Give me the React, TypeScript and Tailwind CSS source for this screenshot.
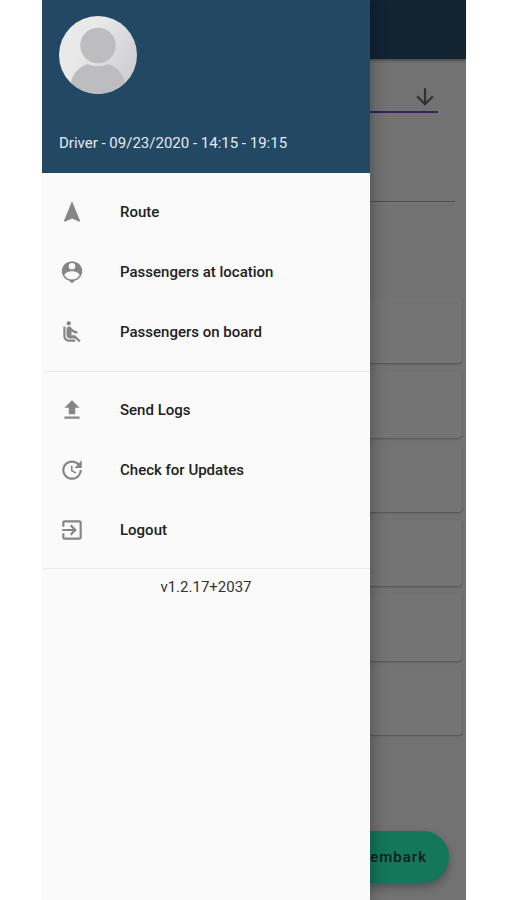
import type { ReactNode } from "react";
import {
  MdAirlineSeatReclineNormal,
  MdArrowDownward,
  MdExitToApp,
  MdFileUpload,
  MdNavigation,
  MdUpdate,
} from "react-icons/md";

function PersonPin() {
  return (
    <svg viewBox="0 0 24 24" fill="currentColor" aria-hidden="true">
      <path
        fillRule="evenodd"
        d="M12 2a9.600 9.200 0 0 1 3 17.900L12 22.300l-3-2.400A9.600 9.200 0 0 1 12 2zm0 1.700a3 3 0 1 0 0 6 3 3 0 0 0 0-6zm0 7.500c-3 0-7 1.500-7 3.700 1.500 2.500 4 4 7 4s5.500-1.500 7-4c0-2.200-4-3.700-7-3.700z"
      />
    </svg>
  );
}

function Avatar() {
  return (
    <svg viewBox="0 0 78 78" className="size-[78px]" role="img" aria-label="Driver photo">
      <defs>
        <linearGradient id="disc" x1="0" y1="0" x2="1" y2="0.6">
          <stop offset="0.4" stopColor="#e9e9ea" />
          <stop offset="1" stopColor="#cfcfd1" />
        </linearGradient>
        <clipPath id="round">
          <circle cx="39" cy="39" r="39" />
        </clipPath>
      </defs>
      <g clipPath="url(#round)">
        <rect width="78" height="78" fill="url(#disc)" />
        <circle cx="39" cy="29.500" r="17.800" fill="#bdbdc0" />
        <path d="M29 48c6 3 14 3 20 0 8 2 15 9 17 18v12H12V66c2-9 9-16 17-18z" fill="#bdbdc0" />
      </g>
    </svg>
  );
}

function Item({ icon, children }: { icon: ReactNode; children: ReactNode }) {
  return (
    <li>
      <button
        type="button"
        className="flex h-[60px] w-full items-center gap-[35px] px-[17px] text-left text-[15px] font-medium text-[#212121]"
      >
        <span className="size-[26px] text-[#858585] [&>svg]:size-full">{icon}</span>
        {children}
      </button>
    </li>
  );
}

function Drawer() {
  return (
    <aside className="z-10 w-[328px] shrink-0 bg-[#fafafa] shadow-[2px_0_14px_rgba(0,0,0,0.3)]">
      <header className="flex h-[173px] flex-col justify-between bg-[#234863] px-[17px] pt-4 pb-5">
        <Avatar />
        <p className="text-[15px] leading-5 text-[#e4ebf0]">Driver - 09/23/2020 - 14:15 - 19:15</p>
      </header>
      <nav aria-label="Main menu">
        <ul className="border-b border-[#ebebeb] py-[9px]">
          <Item icon={<MdNavigation />}>Route</Item>
          <Item icon={<PersonPin />}>Passengers at location</Item>
          <Item icon={<MdAirlineSeatReclineNormal />}>Passengers on board</Item>
        </ul>
        <ul className="border-b border-[#ebebeb] py-2">
          <Item icon={<MdFileUpload />}>Send Logs</Item>
          <Item icon={<MdUpdate />}>Check for Updates</Item>
          <Item icon={<MdExitToApp />}>Logout</Item>
        </ul>
      </nav>
      <p className="pt-2 text-center text-[15px] leading-5 text-[#333333]">v1.2.17+2037</p>
    </aside>
  );
}

function Backdrop() {
  return (
    <main className="flex min-w-0 flex-1 flex-col bg-[#727272]">
      <div className="h-[59px] bg-[#122332] shadow-[0_1px_3px_rgba(0,0,0,0.5)]" />
      <div className="mr-7 flex h-[54px] items-center justify-end border-b-2 border-[#36235f] pt-6 text-[#303030]">
        <button type="button" aria-label="Open list">
          <MdArrowDownward className="size-[26px]" />
        </button>
      </div>
      <div className="mr-[11px] h-[89px] border-b border-[#4f4f4f]" />
      <div className="mt-[95px] mr-1 flex h-[438px] flex-col gap-2">
        {[0, 1, 2, 3, 4, 5].map((n) => (
          <div
            key={n}
            className="flex-1 rounded-r-[4px] bg-[#747474] shadow-[0_1px_2px_rgba(0,0,0,0.3)]"
          />
        ))}
      </div>
      <button
        type="button"
        className="mt-auto mr-[17px] mb-[17px] flex h-[52px] items-center justify-end rounded-r-full bg-[#14775a] pr-[22px] text-[15px] font-medium tracking-[1px] text-[#0c1f1a] shadow-[0_4px_8px_rgba(0,0,0,0.3)]"
      >
        embark
      </button>
    </main>
  );
}

export default function App() {
  return (
    <div className="min-h-screen bg-white pr-[41px] pl-[42px] font-[Roboto,sans-serif]">
      <div className="flex min-h-screen overflow-hidden">
        <Drawer />
        <Backdrop />
      </div>
    </div>
  );
}
